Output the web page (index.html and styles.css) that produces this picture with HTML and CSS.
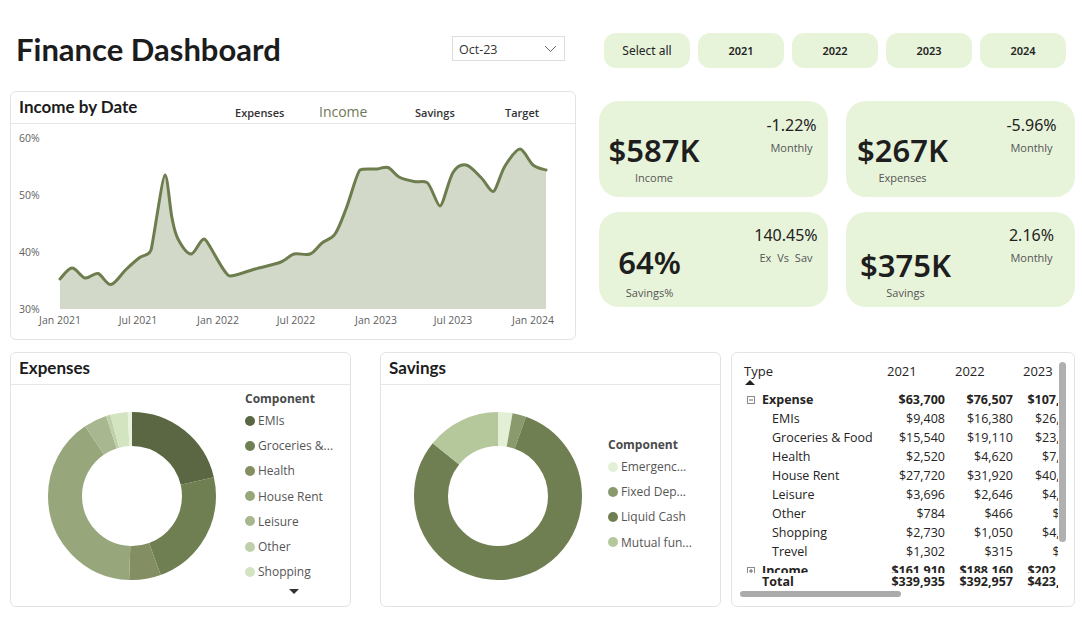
FILE: index.html
```html
<!DOCTYPE html>
<html lang="en">
<head>
<meta charset="utf-8">
<title>Finance Dashboard</title>
<link rel="stylesheet" href="styles.css">
</head>
<body>
<div class="page">
  <header class="header">
    <h1 class="title">Finance Dashboard</h1>
    <div class="dropdown"><span>Oct-23</span><svg width="13" height="8" viewBox="0 0 13 8"><polyline points="1,1 6.5,6.5 12,1" fill="none" stroke="#666" stroke-width="1"/></svg></div>
    <div class="slicer">
      <button class="chip chip-all">Select all</button>
      <button class="chip">2021</button>
      <button class="chip">2022</button>
      <button class="chip">2023</button>
      <button class="chip">2024</button>
    </div>
  </header>

  <section class="top">
    <div class="card chart-card">
      <div class="card-head">
        <h2 class="card-title chart-title">Income by Date</h2>
        <span class="lg lg-exp">Expenses</span>
        <span class="lg lg-inc">Income</span>
        <span class="lg lg-sav">Savings</span>
        <span class="lg">Target</span>
      </div>
      <svg class="chart" width="564" height="215" viewBox="11 124 564 215">
        <path class="area" d="M60,279 C62,277.2 67.8,268.2 72,268 C76.2,267.8 80.7,277.1 85,278 C89.3,278.9 93.7,272.4 98,273.5 C102.3,274.6 106.3,285.2 111,284.5 C115.7,283.8 121.3,273.9 126,269.5 C130.7,265.1 134.8,261.3 139,258 C143.2,254.8 149,256 151,250 C153,244 162.5,175 165,175 C167.5,175 169.8,207.3 172,218 C174.2,228.7 174.8,233 178,239 C181.2,245 186.7,254 191,254 C195.3,254 200,239 204,239 C208,239 224,276 230,276 C236,276 246.5,271.3 255,269 C263.5,266.7 274.5,264.5 281,262 C287.5,259.5 289.2,255.3 294,254 C298.8,252.7 305.3,255.8 310,254 C314.7,252.2 317.8,246.3 322,243 C326.2,239.7 331,239.7 335,234 C339,228.3 341.8,219.7 346,209 C350.2,198.3 357,172 360,170 C363,168 372.3,169.4 377,169 C381.7,168.6 384.3,166.2 388,167.5 C391.7,168.8 394.7,174.7 399,177 C403.3,179.3 409.3,180.6 414,181.5 C418.7,182.4 423,180.5 427,182.5 C431,184.5 437,206 440,206 C443,206 448.7,179.3 453,172.5 C457.3,165.7 461.3,164.2 466,165 C470.7,165.8 476.5,173.1 481,177.5 C485.5,181.9 490,191.5 493,191.5 C496,191.5 500.5,173.1 505,166 C509.5,158.9 516,149 520,149 C524,149 528.7,161.5 533,165 C537.3,168.5 543.8,169.2 546,170 L546,309 L60,309 Z"/>
        <path class="line" d="M60,279 C62,277.2 67.8,268.2 72,268 C76.2,267.8 80.7,277.1 85,278 C89.3,278.9 93.7,272.4 98,273.5 C102.3,274.6 106.3,285.2 111,284.5 C115.7,283.8 121.3,273.9 126,269.5 C130.7,265.1 134.8,261.3 139,258 C143.2,254.8 149,256 151,250 C153,244 162.5,175 165,175 C167.5,175 169.8,207.3 172,218 C174.2,228.7 174.8,233 178,239 C181.2,245 186.7,254 191,254 C195.3,254 200,239 204,239 C208,239 224,276 230,276 C236,276 246.5,271.3 255,269 C263.5,266.7 274.5,264.5 281,262 C287.5,259.5 289.2,255.3 294,254 C298.8,252.7 305.3,255.8 310,254 C314.7,252.2 317.8,246.3 322,243 C326.2,239.7 331,239.7 335,234 C339,228.3 341.8,219.7 346,209 C350.2,198.3 357,172 360,170 C363,168 372.3,169.4 377,169 C381.7,168.6 384.3,166.2 388,167.5 C391.7,168.8 394.7,174.7 399,177 C403.3,179.3 409.3,180.6 414,181.5 C418.7,182.4 423,180.5 427,182.5 C431,184.5 437,206 440,206 C443,206 448.7,179.3 453,172.5 C457.3,165.7 461.3,164.2 466,165 C470.7,165.8 476.5,173.1 481,177.5 C485.5,181.9 490,191.5 493,191.5 C496,191.5 500.5,173.1 505,166 C509.5,158.9 516,149 520,149 C524,149 528.7,161.5 533,165 C537.3,168.5 543.8,169.2 546,170"/>
        <g class="ylab">
          <text x="19" y="142">60%</text>
          <text x="19" y="199">50%</text>
          <text x="19" y="256">40%</text>
          <text x="19" y="313">30%</text>
        </g>
        <g class="xlab">
          <text x="60" y="324">Jan 2021</text>
          <text x="138" y="324">Jul 2021</text>
          <text x="218" y="324">Jan 2022</text>
          <text x="296" y="324">Jul 2022</text>
          <text x="376" y="324">Jan 2023</text>
          <text x="453" y="324">Jul 2023</text>
          <text x="533" y="324">Jan 2024</text>
        </g>
      </svg>
    </div>

    <div class="kpis">
      <div class="kpi">
        <div class="kpi-main k1m"><div class="kpi-val">$587K</div><div class="kpi-lbl">Income</div></div>
        <div class="kpi-side k1s"><div class="kpi-pct">-1.22%</div><div class="kpi-sub">Monthly</div></div>
      </div>
      <div class="kpi">
        <div class="kpi-main k2m"><div class="kpi-val">$267K</div><div class="kpi-lbl">Expenses</div></div>
        <div class="kpi-side k2s"><div class="kpi-pct">-5.96%</div><div class="kpi-sub">Monthly</div></div>
      </div>
      <div class="kpi">
        <div class="kpi-main k3m"><div class="kpi-val">64%</div><div class="kpi-lbl">Savings%</div></div>
        <div class="kpi-side k3s"><div class="kpi-pct">140.45%</div><div class="kpi-sub wide">Ex Vs Sav</div></div>
      </div>
      <div class="kpi">
        <div class="kpi-main k4m"><div class="kpi-val">$375K</div><div class="kpi-lbl">Savings</div></div>
        <div class="kpi-side k4s"><div class="kpi-pct">2.16%</div><div class="kpi-sub">Monthly</div></div>
      </div>
    </div>
  </section>

  <section class="bottom">
    <div class="card donut-card">
      <div class="card-head"><h2 class="card-title">Expenses</h2></div>
      <div class="donut-body">
        <svg class="donut" width="234" height="222" viewBox="0 0 234 222">
          <g transform="rotate(-90 121 111)" fill="none" stroke-width="34">
            <circle cx="121" cy="111" r="67" pathLength="360" stroke="#5b6742" stroke-dasharray="77 283" stroke-dashoffset="0"/>
            <circle cx="121" cy="111" r="67" pathLength="360" stroke="#6f7f52" stroke-dasharray="83 277" stroke-dashoffset="-77"/>
            <circle cx="121" cy="111" r="67" pathLength="360" stroke="#838f63" stroke-dasharray="22 338" stroke-dashoffset="-160"/>
            <circle cx="121" cy="111" r="67" pathLength="360" stroke="#98a67b" stroke-dasharray="144 216" stroke-dashoffset="-182"/>
            <circle cx="121" cy="111" r="67" pathLength="360" stroke="#a9b790" stroke-dasharray="16 344" stroke-dashoffset="-326"/>
            <circle cx="121" cy="111" r="67" pathLength="360" stroke="#bfcfaa" stroke-dasharray="3 357" stroke-dashoffset="-342"/>
            <circle cx="121" cy="111" r="67" pathLength="360" stroke="#d3e4c0" stroke-dasharray="12 348" stroke-dashoffset="-345"/>
            <circle cx="121" cy="111" r="67" pathLength="360" stroke="#e8f3dd" stroke-dasharray="3 357" stroke-dashoffset="-357"/>
          </g>
        </svg>
        <div class="legend">
          <div class="legend-title">Component</div>
          <div class="legend-item"><span class="dot" style="background:#5b6742"></span>EMIs</div>
          <div class="legend-item"><span class="dot" style="background:#6f7f52"></span>Groceries &amp;...</div>
          <div class="legend-item"><span class="dot" style="background:#838f63"></span>Health</div>
          <div class="legend-item"><span class="dot" style="background:#98a67b"></span>House Rent</div>
          <div class="legend-item"><span class="dot" style="background:#a9b790"></span>Leisure</div>
          <div class="legend-item"><span class="dot" style="background:#bfcfaa"></span>Other</div>
          <div class="legend-item"><span class="dot" style="background:#d3e4c0"></span>Shopping</div>
          <div class="more"></div>
        </div>
      </div>
    </div>

    <div class="card donut-card sav-card">
      <div class="card-head"><h2 class="card-title">Savings</h2></div>
      <div class="donut-body">
        <svg class="donut" width="227" height="222" viewBox="0 0 227 222">
          <g transform="rotate(-90 117 111)" fill="none" stroke-width="34">
            <circle cx="117" cy="111" r="67" pathLength="360" stroke="#e3f0d6" stroke-dasharray="10 350" stroke-dashoffset="0"/>
            <circle cx="117" cy="111" r="67" pathLength="360" stroke="#8b9a6d" stroke-dasharray="9.5 350.5" stroke-dashoffset="-10"/>
            <circle cx="117" cy="111" r="67" pathLength="360" stroke="#6f7f52" stroke-dasharray="289.5 70.5" stroke-dashoffset="-19.5"/>
            <circle cx="117" cy="111" r="67" pathLength="360" stroke="#b5c89c" stroke-dasharray="51 309" stroke-dashoffset="-309"/>
          </g>
        </svg>
        <div class="legend legend-sav">
          <div class="legend-title">Component</div>
          <div class="legend-item"><span class="dot" style="background:#e3f0d6"></span>Emergenc...</div>
          <div class="legend-item"><span class="dot" style="background:#8b9a6d"></span>Fixed Dep...</div>
          <div class="legend-item"><span class="dot" style="background:#6f7f52"></span>Liquid Cash</div>
          <div class="legend-item"><span class="dot" style="background:#b5c89c"></span>Mutual fun...</div>
        </div>
      </div>
    </div>

    <div class="card table-card">
      <div class="tbl">
        <div class="trow th"><div class="lab">Type</div><div class="v">2021</div><div class="v">2022</div><div class="v">2023</div></div>
        <div class="sort"></div>
        <div class="tbody">
          <div class="trow grp"><div class="lab"><svg class="tog" width="8" height="8" viewBox="0 0 8 8"><rect x="0.5" y="0.5" width="7" height="7" fill="none" stroke="#8a8a8a"/><line x1="2" y1="4" x2="6" y2="4" stroke="#666"/></svg>Expense</div><div class="v">$63,700</div><div class="v">$76,507</div><div class="v">$107,456</div></div>
          <div class="trow sub"><div class="lab">EMIs</div><div class="v">$9,408</div><div class="v">$16,380</div><div class="v">$26,880</div></div>
          <div class="trow sub"><div class="lab">Groceries &amp; Food</div><div class="v">$15,540</div><div class="v">$19,110</div><div class="v">$23,660</div></div>
          <div class="trow sub"><div class="lab">Health</div><div class="v">$2,520</div><div class="v">$4,620</div><div class="v">$7,140</div></div>
          <div class="trow sub"><div class="lab">House Rent</div><div class="v">$27,720</div><div class="v">$31,920</div><div class="v">$40,020</div></div>
          <div class="trow sub"><div class="lab">Leisure</div><div class="v">$3,696</div><div class="v">$2,646</div><div class="v">$4,116</div></div>
          <div class="trow sub"><div class="lab">Other</div><div class="v">$784</div><div class="v">$466</div><div class="v">$952</div></div>
          <div class="trow sub"><div class="lab">Shopping</div><div class="v">$2,730</div><div class="v">$1,050</div><div class="v">$4,010</div></div>
          <div class="trow sub"><div class="lab">Trevel</div><div class="v">$1,302</div><div class="v">$315</div><div class="v">$678</div></div>
          <div class="trow grp"><div class="lab"><svg class="tog" width="8" height="8" viewBox="0 0 8 8"><rect x="0.5" y="0.5" width="7" height="7" fill="none" stroke="#8a8a8a"/><line x1="2" y1="4" x2="6" y2="4" stroke="#666"/><line x1="4" y1="2" x2="4" y2="6" stroke="#666"/></svg>Income</div><div class="v">$161,910</div><div class="v">$188,160</div><div class="v">$202,860</div></div>
        </div>
        <div class="trow ttotal"><div class="lab">Total</div><div class="v">$339,935</div><div class="v">$392,957</div><div class="v">$423,146</div></div>
      </div>
      <div class="hscroll"></div>
      <div class="vscroll"></div>
    </div>
  </section>
</div>
</body>
</html>
```

FILE: styles.css
```css
* { box-sizing: border-box; }

body {
  margin: 0;
  background: #ffffff;
  font-family: "Open Sans", "Noto Sans", sans-serif;
  color: #252423;
}

.page {
  width: 1082px;
  height: 617px;
  overflow: hidden;
}

/* ---------- header ---------- */
.header {
  display: flex;
  align-items: center;
  height: 35px;
  margin-top: 33px;
}

.title {
  margin: -3px 0 0 16px;
  width: 436px;
  font-family: Lato, "Open Sans", sans-serif;
  font-weight: 700;
  font-size: 31px;
  line-height: 35px;
  color: #1c1c1c;
}

.dropdown {
  width: 113px;
  height: 25px;
  margin-top: -4px;
  margin-right: 39px;
  border: 1px solid #dedede;
  display: flex;
  align-items: center;
  justify-content: space-between;
  padding: 1px 7px 0 6px;
  font-size: 12.5px;
  color: #333;
}

.slicer {
  display: flex;
  gap: 8px;
}

.chip {
  width: 86px;
  height: 35px;
  padding: 0;
  border: 0;
  border-radius: 12px;
  background: #e8f4da;
  font-family: "Noto Sans", sans-serif;
  font-size: 11px;
  font-weight: 600;
  color: #222;
}

.chip-all {
  font-size: 12px;
  font-weight: 400;
}

/* ---------- cards ---------- */
.card {
  border: 1px solid #e3e3e3;
  border-radius: 6px;
  background: #fff;
}

.card-head {
  height: 32px;
  display: flex;
  align-items: flex-start;
  padding: 5px 0 0 8px;
  border-bottom: 1px solid #e6e6e6;
}

.card-title {
  margin: 0;
  font-family: Lato, "Open Sans", sans-serif;
  font-weight: 700;
  font-size: 17px;
  line-height: 20px;
  color: #1c1c1c;
}

/* ---------- top row ---------- */
.top {
  display: flex;
  align-items: flex-start;
  margin-top: 23px;
}

.chart-card {
  margin-left: 10px;
  width: 566px;
  height: 249px;
  overflow: hidden;
}

.chart-title { width: 216px; }

.lg {
  font-size: 11px;
  font-weight: 600;
  line-height: 14px;
  margin-top: 9px;
  color: #333;
}

.lg-exp { width: 84px; }
.lg-sav { width: 90px; }
.lg-inc {
  width: 96px;
  font-size: 14px;
  line-height: 18px;
  margin-top: 6px;
  font-weight: 500;
  color: #6f7757;
}

.chart { display: block; }

.chart .area { fill: #d2d9c9; }
.chart .line {
  fill: none;
  stroke: #6d7d4e;
  stroke-width: 3;
  stroke-linejoin: round;
  stroke-linecap: round;
}

.chart text {
  font-family: "Open Sans", sans-serif;
  font-size: 10.5px;
  fill: #5f5f5f;
}

.chart .xlab text { text-anchor: middle; }

/* ---------- KPI ---------- */
.kpis {
  margin: 10px 0 0 23px;
  display: grid;
  grid-template-columns: 229px 229px;
  grid-template-rows: 96px 95px;
  gap: 15px 18px;
}

.kpi {
  background: #e8f4da;
  border-radius: 20px;
  display: flex;
  justify-content: space-between;
}

.kpi-main {
  width: 112px;
  display: flex;
  flex-direction: column;
  align-items: center;
  padding-top: 29px;
}

.kpi-val {
  font-family: "Noto Sans", sans-serif;
  font-size: 31px;
  font-weight: 600;
  line-height: 40px;
  color: #1e1e1e;
}

.kpi-lbl {
  font-size: 11px;
  line-height: 16px;
  color: #555;
}

.kpi-side {
  width: 84px;
  display: flex;
  flex-direction: column;
  align-items: center;
  padding-top: 13px;
}

.kpi-pct {
  font-family: "Noto Sans", sans-serif;
  font-size: 16px;
  line-height: 22px;
  color: #222;
}

.kpi-sub {
  font-size: 11px;
  line-height: 16px;
  margin-top: 4px;
  color: #555;
}

.kpi-sub.wide { word-spacing: 3px; }

.k1m { width: 110px; }
.k1s { width: 73px; }
.k2m { width: 113px; }
.k2s { width: 87px; }
.k3m { width: 101px; padding-top: 30px; }
.k3m .kpi-lbl { margin-top: 3px; }
.k3s { width: 84px; padding-top: 12px; }
.k4m { width: 119px; padding-top: 33px; }
.k4s { width: 87px; padding-top: 12px; }

/* ---------- bottom row ---------- */
.bottom {
  display: flex;
  margin-top: 12px;
}

.donut-card {
  margin-left: 10px;
  width: 341px;
  height: 255px;
}

.sav-card { margin-left: 29px; }

.donut-body { display: flex; }
.donut { display: block; flex: none; }

.legend { padding-top: 6px; }
.legend-sav { padding-top: 52px; }

.legend-title {
  font-size: 12px;
  font-weight: 700;
  line-height: 16px;
  color: #4a4a4a;
}

.legend-item {
  display: flex;
  align-items: center;
  height: 25.2px;
  font-size: 12px;
  color: #555;
  white-space: nowrap;
}

.legend .legend-title + .legend-item { margin-top: 1px; }

.dot {
  width: 10px;
  height: 10px;
  border-radius: 50%;
  margin-right: 3px;
  flex: none;
}

.more {
  width: 0;
  height: 0;
  border-left: 5px solid transparent;
  border-right: 5px solid transparent;
  border-top: 5px solid #333;
  margin: 5px 0 0 44px;
}

/* ---------- table ---------- */
.table-card {
  position: relative;
  margin-left: 10px;
  width: 344px;
  height: 255px;
}

.tbl {
  margin: 10px 0 0 9px;
  width: 317px;
  overflow: hidden;
}

.trow {
  display: grid;
  grid-template-columns: 144px 68px 68px 68px;
  height: 19px;
  line-height: 19px;
  font-size: 12.5px;
  color: #252423;
  white-space: nowrap;
}

.trow .v {
  text-align: right;
  padding-right: 8px;
}

.th {
  height: 17px;
  line-height: 17px;
  font-size: 13px;
}

.th .lab { padding-left: 3px; }
.th .v { text-align: left; padding-left: 2px; padding-right: 0; }

.sort {
  width: 0;
  height: 0;
  margin: 0 0 5px 4px;
  border-left: 5px solid transparent;
  border-right: 5px solid transparent;
  border-bottom: 5px solid #222;
}

.tbody {
  height: 183px;
  overflow: hidden;
}

.grp { font-weight: 700; }
.grp .lab {
  display: flex;
  align-items: center;
  padding-left: 6px;
}

.tog { margin-right: 7px; flex: none; }

.sub .lab { padding-left: 31px; }

.ttotal {
  height: 18px;
  line-height: 18px;
  font-weight: 700;
  background: #fff;
}

.ttotal .lab { padding-left: 21px; }

.hscroll {
  margin-left: 8px;
  width: 161px;
  height: 6px;
  border-radius: 3px;
  background: #ababab;
}

.vscroll {
  position: absolute;
  left: 327px;
  top: 9px;
  width: 7px;
  height: 180px;
  border-radius: 4px;
  background: #b0b0b0;
}
```
